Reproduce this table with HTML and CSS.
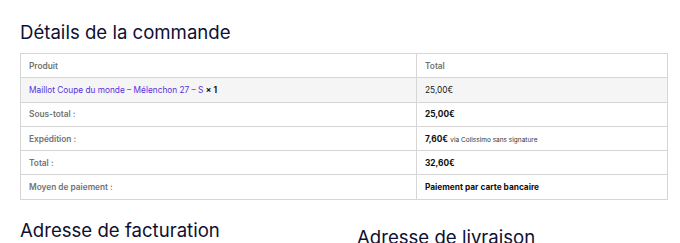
FILE: index.html
```html
<!DOCTYPE html>
<html lang="fr">
<head>
<meta charset="utf-8">
<link rel="stylesheet" href="styles.css">
</head>
<body>
<section class="order">
  <h2 class="title">Détails de la commande</h2>
  <table class="details">
    <thead>
      <tr><th class="c1">Produit</th><th class="c2">Total</th></tr>
    </thead>
    <tbody>
      <tr class="item"><td><a href="#" class="link">Maillot Coupe du monde – Mélenchon 27 – S</a> <strong>× 1</strong></td><td>25,00€</td></tr>
    </tbody>
    <tfoot>
      <tr><th>Sous-total :</th><td><strong>25,00€</strong></td></tr>
      <tr><th>Expédition :</th><td><strong>7,60€</strong> <small>via Colissimo sans signature</small></td></tr>
      <tr><th>Total :</th><td><strong>32,60€</strong></td></tr>
      <tr><th>Moyen de paiement :</th><td><strong>Paiement par carte bancaire</strong></td></tr>
    </tfoot>
  </table>
  <div class="addresses">
    <h2 class="title addr">Adresse de facturation</h2>
    <h2 class="title addr ship">Adresse de livraison</h2>
  </div>
</section>
</body>
</html>
```
FILE: styles.css
```css
html, body {
  margin: 0;
  padding: 0;
  background: #ffffff;
}
body {
  font-family: Inter, "Noto Sans", sans-serif;
  color: #111;
}
.order {
  padding: 20px 12px 0 20px;
}
.title {
  margin: 0;
  font-size: 18.6px;
  font-weight: 400;
  line-height: 24px;
  color: #0f1033;
}
.details {
  margin-top: 9px;
  width: 648px;
  border-collapse: collapse;
  border: 1px solid #d2d2d2;
  font-size: 8.3px;
}
.details th, .details td {
  height: 23.3px;
  padding: 0 8px;
  border: 1px solid #d6d6d6;
  text-align: left;
  vertical-align: middle;
}
.details th {
  font-weight: 600;
  color: #727272;
}
.details .c1 { width: 379px; }
.details td { color: #1a1a1a; }
.details td strong { font-weight: 700; color: #111; }
.details small { font-size: 6.5px; color: #333; }
.item td { background: #f5f5f5; }
.link { color: #5b2ee0; text-decoration: none; }
.addresses {
  display: grid;
  grid-template-columns: 311px 311px;
  column-gap: 26px;
  margin-top: 18px;
}
.ship { margin-top: 7px; }
```
